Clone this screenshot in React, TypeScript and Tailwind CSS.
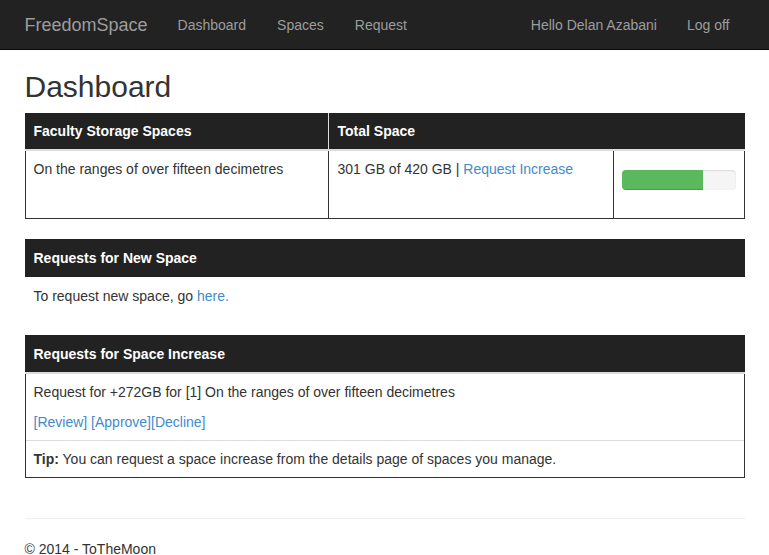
const linkColor = 'text-[#428bca]';

function Navbar() {
    return (
        <div className="h-[50px] bg-[#222] border-b border-[#080808]">
            <div className="mx-auto w-[720px] flex justify-between">
                <div className="flex">
                    <a className="py-[15px] pr-[15px] text-[18px] leading-[20px] text-[#9d9d9d]">FreedomSpace</a>
                    <a className="p-[15px] text-[#9d9d9d]">Dashboard</a>
                    <a className="py-[15px] px-4 text-[#9d9d9d]">Spaces</a>
                    <a className="p-[15px] text-[#9d9d9d]">Request</a>
                </div>
                <div className="flex">
                    <a className="p-[15px] text-[#9d9d9d]">Hello Delan Azabani</a>
                    <a className="p-[15px] text-[#9d9d9d]">Log off</a>
                </div>
            </div>
        </div>
    );
}

function StorageTable() {
    const used = 301;
    const total = 420;
    return (
        <div className="mb-5">
            {/* Header */}
            <div className="flex h-[36px] bg-[#222] text-white font-bold items-center">
                <div className="w-[304px] h-full flex items-center pl-[9px] border-r border-[#ddd]">
                    Faculty Storage Spaces
                </div>
                <div className="flex-1 pl-[9px]">Total Space</div>
            </div>
            <div className="h-[2px] bg-[#ddd]" />

            {/* Row */}
            <div className="flex border-x border-b border-[#333]">
                <div className="w-[303px] px-2 pt-2 border-r border-[#333]">
                    On the ranges of over fifteen decimetres
                </div>
                <div className="w-[285px] pl-[9px] pr-2 pt-2 border-r border-[#333]">
                    {used} GB of {total} GB | <a className={linkColor}>Request Increase</a>
                </div>
                <div className="flex-1 px-2 pt-[19px] pb-[28px]">
                    <div className="h-5 rounded bg-[#f5f5f5] overflow-hidden shadow-[inset_0_1px_2px_rgba(0,0,0,0.1)]">
                        <div
                            className="h-full bg-[#5cb85c] shadow-[inset_0_-1px_0_rgba(0,0,0,0.15)]"
                            style={{ width: `${(used / total) * 100}%` }}
                        />
                    </div>
                </div>
            </div>
        </div>
    );
}

export default function App() {
    return (
        <div className="min-h-[555px] bg-white text-[14px] leading-[20px] text-[#333] font-['Liberation_Sans',Arial,sans-serif]">
            <Navbar />

            <div className="mx-auto w-[720px]">
                <h2 className="mt-5 mb-[10px] text-[30px] leading-[33px] font-normal">Dashboard</h2>

                <StorageTable />

                {/* Requests for New Space */}
                <div className="mb-5">
                    <div className="h-[38px] bg-[#222] text-white font-bold flex items-center pl-[9px]">
                        Requests for New Space
                    </div>
                    <div className="px-[9px] py-[9px]">
                        To request new space, go <a className={linkColor}>here.</a>
                    </div>
                </div>

                {/* Requests for Space Increase */}
                <div>
                    <div className="h-[37px] bg-[#222] text-white font-bold flex items-center pl-[9px]">
                        Requests for Space Increase
                    </div>
                    <div className="h-[2px] bg-[#ddd]" />
                    <div className="border-x border-b border-[#333]">
                        <div className="p-2">
                            <p className="mb-[10px]">Request for +272GB for [1] On the ranges of over fifteen decimetres</p>
                            <div className={linkColor}>
                                <a>[Review]</a> <a>[Approve]</a><a>[Decline]</a>
                            </div>
                        </div>
                        <div className="p-2 border-t border-[#ddd]">
                            <b>Tip:</b> You can request a space increase from the details page of spaces you manage.
                        </div>
                    </div>
                </div>

                <hr className="mt-10 mb-5 border-0 border-t border-[#eee]" />
                <footer>
                    <p>© 2014 - ToTheMoon</p>
                </footer>
            </div>
        </div>
    );
}
